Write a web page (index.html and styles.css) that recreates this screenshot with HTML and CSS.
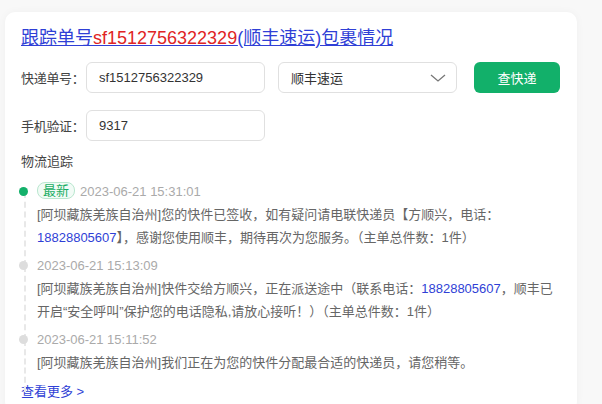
FILE: index.html
```html
<!DOCTYPE html>
<html lang="zh-CN">
<head>
    <meta charset="UTF-8">
    <meta name="viewport" content="width=device-width, initial-scale=1.0">
    <title>快递查询</title>
    <link rel="stylesheet" href="styles.css">
</head>
<body>
    <div class="card">
        <!-- 标题 -->
        <h1 class="title"><a href="#">跟踪单号<span class="num">sf1512756322329</span>(顺丰速运)包裹情况</a></h1>

        <!-- 查询表单 -->
        <div class="row">
            <label>快递单号：</label>
            <div class="input">sf1512756322329</div>
            <div class="input select">
                <span>顺丰速运</span>
                <svg width="16" height="8" viewBox="0 0 16 8"><path d="M1 1 L8 7 L15 1" fill="none" stroke="#777" stroke-width="1.3"/></svg>
            </div>
            <button class="btn">查快递</button>
        </div>
        <div class="row row2">
            <label>手机验证：</label>
            <div class="input">9317</div>
        </div>

        <!-- 物流追踪 -->
        <div class="sub">物流追踪</div>
        <ul class="timeline">
            <li class="item active">
                <div class="head"><span class="tag">最新</span>2023-06-21 15:31:01</div>
                <p>[阿坝藏族羌族自治州]您的快件已签收，如有疑问请电联快递员【方顺兴，电话：<span class="tel">18828805607</span>】，感谢您使用顺丰，期待再次为您服务。（主单总件数：1件）</p>
            </li>
            <li class="item">
                <div class="head">2023-06-21 15:13:09</div>
                <p>[阿坝藏族羌族自治州]快件交给方顺兴，正在派送途中（联系电话：<span class="tel">18828805607</span>，顺丰已开启“安全呼叫”保护您的电话隐私,请放心接听！）（主单总件数：1件）</p>
            </li>
            <li class="item">
                <div class="head">2023-06-21 15:11:52</div>
                <p>[阿坝藏族羌族自治州]我们正在为您的快件分配最合适的快递员，请您稍等。</p>
            </li>
        </ul>
        <a class="more" href="#">查看更多 &gt;</a>
    </div>
</body>
</html>
```

FILE: styles.css
```css
body {
    margin: 0;
    padding: 12px 25px 0 5px;
    background: #f8f8f8;
    font-family: "Liberation Sans", "Noto Sans CJK SC", sans-serif;
    color: #333;
}

.card {
    background: #fff;
    border-radius: 10px;
    box-shadow: 0 0 8px rgba(0,0,0,0.04);
    padding: 16px 17px 20px 16px;
    height: 400px;
    box-sizing: border-box;
}

/* 标题 */
.title {
    margin: 0;
    font-size: 18px;
    font-weight: normal;
    line-height: 20px;
}

.title a {
    color: #2f3fd6;
    text-decoration: underline;
}

.title .num {
    color: #e02424;
}

/* 表单 */
.row {
    display: flex;
    align-items: center;
    margin-top: 14px;
    height: 31px;
    font-size: 13px;
}

.row2 {
    margin-top: 17px;
}

.row label {
    width: 65px;
    color: #444;
    white-space: nowrap;
    letter-spacing: -0.3px;
}

.input {
    width: 179px;
    height: 31px;
    box-sizing: border-box;
    border: 1px solid #e0e0e0;
    border-radius: 6px;
    padding: 0 12px;
    display: flex;
    align-items: center;
    color: #333;
}

.select {
    margin-left: 13px;
    justify-content: space-between;
    padding-right: 10px;
}

.btn {
    margin-left: 17px;
    width: 86px;
    height: 31px;
    border: none;
    border-radius: 6px;
    background: #12b06a;
    color: #fff;
    font-size: 13px;
    font-family: inherit;
}

/* 物流追踪 */
.sub {
    margin-top: 11px;
    font-size: 13px;
    line-height: 20px;
    color: #444;
}

.timeline {
    list-style: none;
    margin: 10px 0 0;
    padding: 0;
    font-size: 13px;
}

.item {
    position: relative;
    padding: 0 0 7px 16px;
}

.item::before {
    content: "";
    position: absolute;
    left: 3px;
    top: 10px;
    bottom: -10px;
    border-left: 2px dashed #e8e8e8;
}

.item::after {
    content: "";
    position: absolute;
    left: -2px;
    top: 5px;
    width: 9px;
    height: 9px;
    border-radius: 50%;
    background: #ddd;
}

.item.active::after {
    background: #13b06a;
}

.head {
    line-height: 20px;
    color: #aaa;
    margin-bottom: 2px;
}

.tag {
    display: inline-block;
    height: 15px;
    line-height: 15px;
    padding: 0 5px;
    margin-right: 5px;
    border: 1px solid #b9e7cf;
    border-radius: 8px;
    background: #f2fbf6;
    color: #19ad63;
    font-size: 13px;
    vertical-align: 1px;
}

.item p {
    margin: 0;
    line-height: 22.5px;
    color: #666;
}

.tel {
    color: #2f3fd6;
}

.more {
    display: block;
    font-size: 13px;
    line-height: 20px;
    color: #2f3fd6;
    text-decoration: none;
}
```
